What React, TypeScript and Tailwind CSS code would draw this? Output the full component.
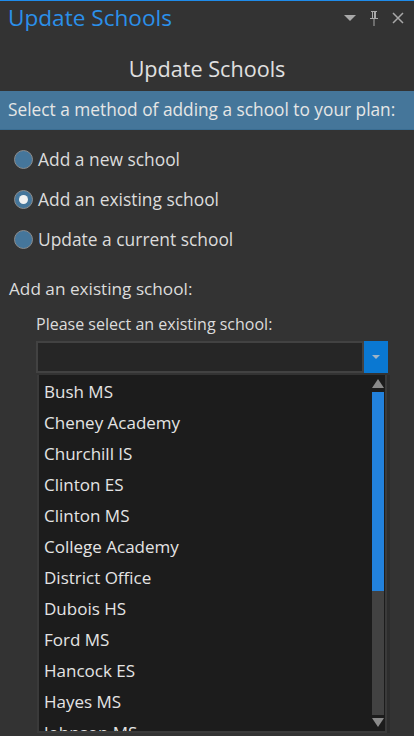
import React from 'react';

const SCHOOLS = [
  'Bush MS',
  'Cheney Academy',
  'Churchill IS',
  'Clinton ES',
  'Clinton MS',
  'College Academy',
  'District Office',
  'Dubois HS',
  'Ford MS',
  'Hancock ES',
  'Hayes MS',
  'Johnson MS',
];

const OPTIONS = [
  { label: 'Add a new school', checked: false },
  { label: 'Add an existing school', checked: true },
  { label: 'Update a current school', checked: false },
];

function Radio({ checked }: { checked: boolean }) {
  return (
    <span className="flex h-[19px] w-[19px] shrink-0 items-center justify-center rounded-full border border-[#8c8c8c] bg-[#45769b]">
      {checked && <span className="h-[9px] w-[9px] rounded-full bg-[#f2f2f2]" />}
    </span>
  );
}

export default function App() {
  return (
    <div
      className="flex h-[736px] w-[414px] flex-col overflow-hidden border-t border-[#1f8ceb] bg-[#333333] text-[#dcdcdc]"
      style={{ fontFamily: '"Open Sans", "Noto Sans", sans-serif' }}
    >
      {/* pane title */}
      <div className="flex h-[34px] items-center justify-between pl-[8px] pr-[10px]">
        <span className="text-[22.6px] leading-none text-[#2b90ea]">Update Schools</span>
        <div className="flex items-center gap-[13px] text-[#a8a8a8]">
          <svg width="12" height="7" viewBox="0 0 12 7"><path d="M0 0h12L6 6z" fill="currentColor" /></svg>
          <svg width="10" height="16" viewBox="0 0 10 16">
            <path d="M2 1h6v1H7v6h2v1H1V8h2V2H2z M4 2v6h1V2z M4.5 9h1v7h-1z" fill="currentColor" />
          </svg>
          <svg width="12" height="12" viewBox="0 0 12 12">
            <path d="M1 1l10 10M11 1L1 11" stroke="currentColor" strokeWidth="1.5" />
          </svg>
        </div>
      </div>

      <div className="flex h-[56px] items-center justify-center pt-[12px] text-[21.6px] text-[#e0e0e0]">Update Schools</div>

      <div className="flex h-[39px] items-center border-b border-[#3a6d92] bg-[#45769a] pl-[8px] text-[17.3px] text-[#e6e6e6]">
        Select a method of adding a school to your plan:
      </div>

      <div className="flex flex-col gap-[21px] pl-[14px] pt-[20px]">
        {OPTIONS.map((o) => (
          <label key={o.label} className="flex h-[19px] items-center gap-[5px] text-[17.4px]">
            <Radio checked={o.checked} />
            <span>{o.label}</span>
          </label>
        ))}
      </div>

      <div className="pl-[9px] pt-[30px] text-[17.2px] leading-[20px]">Add an existing school:</div>
      <div className="pl-[36px] pt-[15px] text-[16px] leading-[20px]">Please select an existing school:</div>

      {/* combo box */}
      <div className="ml-[36px] mt-[7px] flex h-[32px] w-[352px]">
        <div className="flex-1 border-2 border-[#424242] bg-[#262626]" />
        <div className="flex w-[24px] items-center justify-center bg-[#0a78d2]">
          <svg width="8" height="5" viewBox="0 0 8 5"><path d="M0 0h8L4 4z" fill="#9fb4c6" /></svg>
        </div>
      </div>

      {/* dropdown list */}
      <div className="ml-[37px] mt-[2px] flex h-[358px] w-[350px] shrink-0 border-2 border-t-0 border-[#3a3a3a] bg-[#1c1c1c] shadow-[3px_0_0_#2d2d2d]">
        <ul className="flex-1 overflow-hidden pt-[1px]">
          {SCHOOLS.map((s) => (
            <li key={s} className="flex h-[31px] items-center pl-[5px] text-[17px] text-[#e4e4e4]">
              {s}
            </li>
          ))}
        </ul>
        <div className="mr-[1px] flex w-[12px] flex-col items-center">
          <svg className="mt-[4px]" width="12" height="9" viewBox="0 0 12 9"><path d="M6 0l6 9H0z" fill="#8a8a8a" /></svg>
          <div className="mt-[4px] flex w-[12px] flex-1 flex-col bg-[#424242]">
            <div className="h-[199px] bg-[#2281dc]" />
          </div>
          <svg className="mb-[4px] mt-[3px]" width="12" height="9" viewBox="0 0 12 9"><path d="M0 0h12L6 9z" fill="#8a8a8a" /></svg>
        </div>
      </div>
    </div>
  );
}
